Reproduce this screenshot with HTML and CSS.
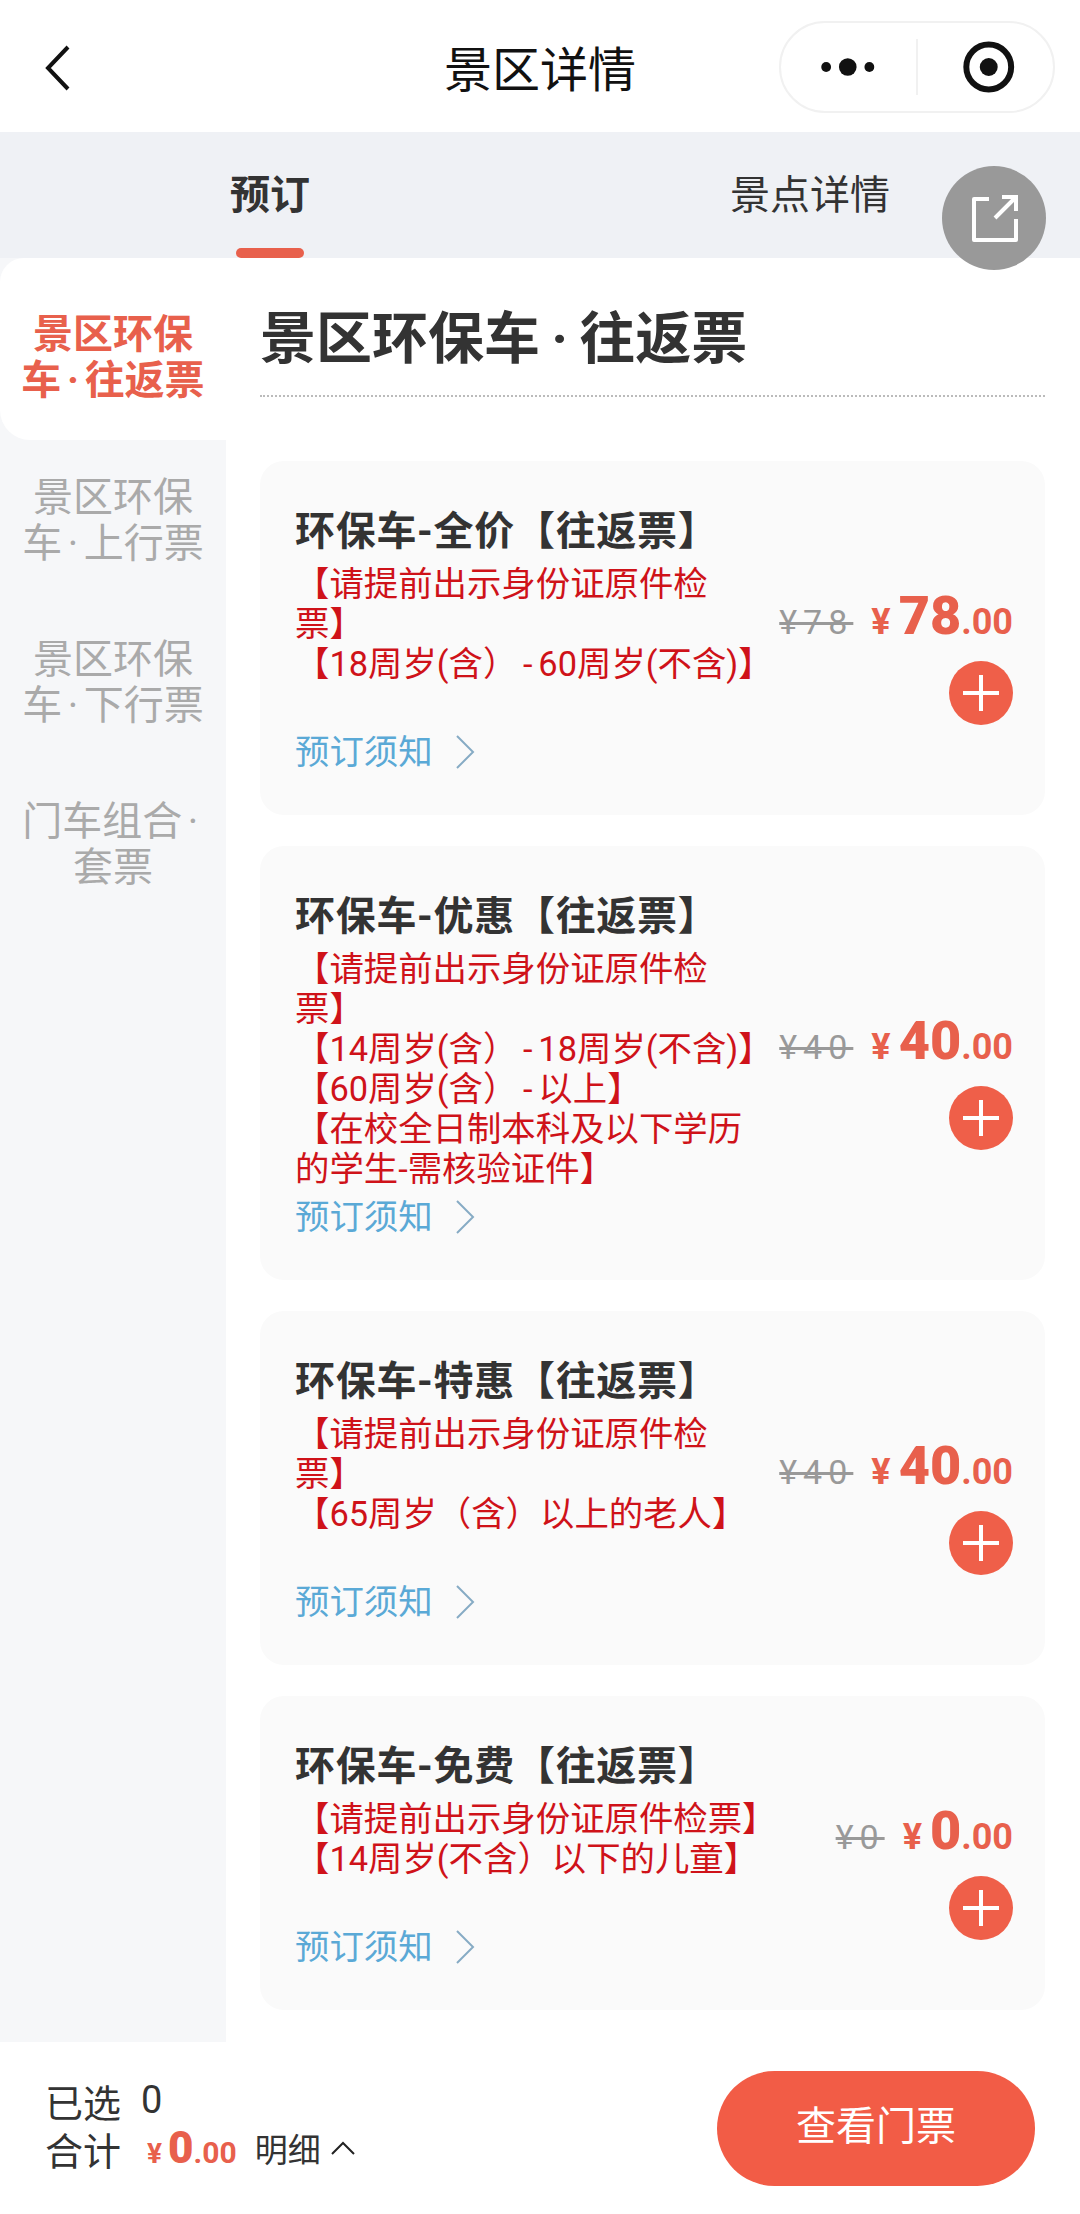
FILE: index.html
```html
<!DOCTYPE html>
<html lang="zh-CN">
<head>
  <meta charset="UTF-8" />
  <meta name="viewport" content="width=device-width, initial-scale=1.0"/>
  <title>景区详情</title>
  <link rel="stylesheet" href="styles.css">
</head>
<body>
  <div class="page">
    <div class="navBar">
      <svg class="backIcon" width="26" height="46" viewBox="0 0 26 46">
        <path d="M23 2 L3 23 L23 44" fill="none" stroke="#111" stroke-width="4"/>
      </svg>
      <div class="navTitle">景区详情</div>
      <div class="capsule">
        <svg class="capsuleMore" width="137" height="56" viewBox="0 0 137 56">
          <circle cx="46" cy="28" r="5" fill="#111"/>
          <circle cx="68" cy="28" r="9" fill="#111"/>
          <circle cx="90" cy="28" r="5" fill="#111"/>
        </svg>
        <svg class="capsuleClose" width="136" height="56" viewBox="0 0 136 56">
          <circle cx="71" cy="28" r="22.5" fill="none" stroke="#111" stroke-width="6"/>
          <circle cx="71" cy="28" r="9" fill="#111"/>
        </svg>
      </div>
    </div>

    <div class="tabs">
      <div class="tab active">预订</div>
      <div class="tab">景点详情</div>
    </div>

    <!-- 分享按钮 -->
    <div class="shareButton">
      <svg width="50" height="50" viewBox="0 0 50 50">
        <path d="M20 6 H5 V47 H47 V26" fill="none" stroke="#fff" stroke-width="4" stroke-linejoin="round"/>
        <path d="M26 25 L46 5 M33 4 H47 V18" fill="none" stroke="#fff" stroke-width="4"/>
      </svg>
    </div>

    <div class="main">
      <div class="sideMenu">
        <div class="menuItem active">景区环保<br>车<span class="dot">·</span>往返票</div>
        <div class="menuItem">景区环保<br>车<span class="dot">·</span>上行票</div>
        <div class="menuItem">景区环保<br>车<span class="dot">·</span>下行票</div>
        <div class="menuItem">门车组合<span class="dot">·</span><br>套票</div>
      </div>

      <div class="content">
        <div class="sectionTitle">景区环保车<span class="dot">·</span>往返票</div>

        <div class="ticketList">
          <div class="ticket">
            <div class="ticketInfo">
              <div class="ticketName">环保车-全价【往返票】</div>
              <div class="ticketRules extraLine">【请提前出示身份证原件检<br>票】<br>【18周岁(含） - 60周岁(不含)】</div>
              <div class="notice">预订须知
                <svg class="noticeArrow" width="20" height="34" viewBox="0 0 20 34">
                  <path d="M2 1 L18 17 L2 33" fill="none" stroke="#86abc4" stroke-width="2"/>
                </svg>
              </div>
            </div>
            <div class="ticketSide">
              <div class="priceRow">
                <span class="oldPrice">¥78</span>
                <span class="price"><span class="yen">¥</span><b>78</b><span class="cents">.00</span></span>
              </div>
              <div class="addButton"></div>
            </div>
          </div>

          <div class="ticket">
            <div class="ticketInfo">
              <div class="ticketName">环保车-优惠【往返票】</div>
              <div class="ticketRules">【请提前出示身份证原件检<br>票】<br>【14周岁(含） - 18周岁(不含)】<br>【60周岁(含） - 以上】<br>【在校全日制本科及以下学历<br>的学生-需核验证件】</div>
              <div class="notice">预订须知
                <svg class="noticeArrow" width="20" height="34" viewBox="0 0 20 34">
                  <path d="M2 1 L18 17 L2 33" fill="none" stroke="#86abc4" stroke-width="2"/>
                </svg>
              </div>
            </div>
            <div class="ticketSide">
              <div class="priceRow">
                <span class="oldPrice">¥40</span>
                <span class="price"><span class="yen">¥</span><b>40</b><span class="cents">.00</span></span>
              </div>
              <div class="addButton"></div>
            </div>
          </div>

          <div class="ticket">
            <div class="ticketInfo">
              <div class="ticketName">环保车-特惠【往返票】</div>
              <div class="ticketRules extraLine">【请提前出示身份证原件检<br>票】<br>【65周岁（含）以上的老人】</div>
              <div class="notice">预订须知
                <svg class="noticeArrow" width="20" height="34" viewBox="0 0 20 34">
                  <path d="M2 1 L18 17 L2 33" fill="none" stroke="#86abc4" stroke-width="2"/>
                </svg>
              </div>
            </div>
            <div class="ticketSide">
              <div class="priceRow">
                <span class="oldPrice">¥40</span>
                <span class="price"><span class="yen">¥</span><b>40</b><span class="cents">.00</span></span>
              </div>
              <div class="addButton"></div>
            </div>
          </div>

          <div class="ticket">
            <div class="ticketInfo">
              <div class="ticketName">环保车-免费【往返票】</div>
              <div class="ticketRules extraLine">【请提前出示身份证原件检票】<br>【14周岁(不含）以下的儿童】</div>
              <div class="notice">预订须知
                <svg class="noticeArrow" width="20" height="34" viewBox="0 0 20 34">
                  <path d="M2 1 L18 17 L2 33" fill="none" stroke="#86abc4" stroke-width="2"/>
                </svg>
              </div>
            </div>
            <div class="ticketSide">
              <div class="priceRow">
                <span class="oldPrice">¥0</span>
                <span class="price"><span class="yen">¥</span><b>0</b><span class="cents">.00</span></span>
              </div>
              <div class="addButton"></div>
            </div>
          </div>
        </div>
      </div>
    </div>

    <div class="footer">
      <div class="summary">
        <div class="summaryRow">已选<span class="selectedCount">0</span></div>
        <div class="summaryRow">
          合计
          <span class="totalPrice"><span class="yen">¥</span><b>0</b><span class="cents">.00</span></span>
          <span class="detailLink">明细</span>
          <svg width="24" height="14" viewBox="0 0 24 14">
            <path d="M1 13 L12 2 L23 13" fill="none" stroke="#222" stroke-width="2"/>
          </svg>
        </div>
      </div>
      <div class="checkButton">查看门票</div>
    </div>
  </div>
</body>
</html>
```

FILE: styles.css
```css
* {
  box-sizing: border-box;
}
body {
  margin: 0;
  font-family: Roboto, "Noto Sans CJK SC", sans-serif;
  color: #333;
  background-color: white;
}
.page {
  position: relative;
  display: flex;
  flex-direction: column;
  width: 1080px;
  height: 2214px;
  overflow: hidden;
}

/* 顶部导航 */
.navBar {
  display: flex;
  align-items: center;
  justify-content: center;
  position: relative;
  height: 132px;
  background-color: white;
}
.navTitle {
  font-size: 48px;
  color: #111;
}
.backIcon {
  position: absolute;
  left: 45px;
  top: 45px;
}
.capsule {
  position: absolute;
  left: 779px;
  top: 21px;
  width: 276px;
  height: 92px;
  display: flex;
  align-items: center;
  border: 2px solid #f1f1f1;
  border-radius: 46px;
}
.capsuleMore {
  border-right: 2px solid #f1f1f1;
}

/* 标签 */
.tabs {
  display: flex;
  height: 126px;
  background-color: #eff1f5;
}
.tab {
  position: relative;
  width: 540px;
  padding-top: 34px;
  text-align: center;
  font-size: 40px;
  line-height: 60px;
}
.tab.active {
  font-weight: bold;
}
.tab.active::after {
  content: "";
  position: absolute;
  left: 236px;
  bottom: 0;
  width: 68px;
  height: 10px;
  border-radius: 5px;
  background-color: #e8604c;
}
.shareButton {
  position: absolute;
  left: 942px;
  top: 166px;
  width: 104px;
  height: 104px;
  display: flex;
  align-items: center;
  justify-content: center;
  border-radius: 50%;
  background-color: #999;
  z-index: 2;
}

/* 主体 */
.main {
  flex: 1;
  display: flex;
  min-height: 0;
  background-color: #eff1f5;
}
.sideMenu {
  width: 226px;
  padding-top: 17px;
  flex-shrink: 0;
  position: relative;
  background-color: #f6f7f9;
}
.menuItem {
  height: 162px;
  padding: 35px 14px 0;
  text-align: center;
  font-size: 40px;
  line-height: 46px;
  color: #aaa;
}
.menuItem.active {
  height: 182px;
  margin-top: -17px;
  padding-top: 54px;
  font-weight: bold;
  color: #e8604c;
  background-color: white;
  border-radius: 24px 0 0 30px;
}
.dot {
  display: inline-block;
  margin: 0 .14em;
  line-height: 1;
}
.content {
  flex: 1;
  padding: 0 35px 0 34px;
  background-color: white;
}
.sectionTitle {
  padding-top: 41px;
  height: 139px;
  border-bottom: 2px dotted #bbb;
  font-size: 56px;
  line-height: 80px;
  font-weight: bold;
}
.sectionTitle .dot {
  margin: 0 .2em;
}

/* 票 */
.ticketList {
  display: flex;
  flex-direction: column;
  gap: 31px;
  margin-top: 64px;
}
.ticket {
  display: flex;
  align-items: center;
  gap: 4px;
  padding: 43px 32px 39px 35px;
  border-radius: 24px;
  background-color: #fafafa;
}
.ticketInfo {
  flex: 1;
  min-width: 0;
}
.ticketName {
  font-size: 40px;
  line-height: 56px;
  font-weight: bold;
  letter-spacing: .7px;
  white-space: nowrap;
}
.ticketRules {
  margin-top: 4px;
  font-size: 34.4px;
  line-height: 40px;
  word-spacing: -2.8px;
  color: #cf1219;
  white-space: nowrap;
}
.ticketRules.extraLine {
  padding-bottom: 40px;
}
.notice {
  display: flex;
  align-items: center;
  gap: 22px;
  margin-top: 4px;
  font-size: 34.4px;
  line-height: 48px;
  color: #5aa9d6;
}
.ticketSide {
  flex-shrink: 0;
  display: flex;
  flex-direction: column;
  align-items: flex-end;
  margin-top: 30px;
}
.priceRow {
  display: flex;
  align-items: baseline;
  gap: 18px;
  height: 60px;
  line-height: 60px;
}
.oldPrice {
  font-size: 34px;
  letter-spacing: 6px;
  color: #999;
  text-decoration: line-through;
}
.price,
.totalPrice {
  color: #e8604c;
  font-weight: bold;
}
.price b {
  font-size: 54px;
  margin-left: 8px;
}
.yen {
  font-size: 36px;
}
.cents {
  font-size: 36px;
}
.addButton {
  position: relative;
  width: 64px;
  height: 64px;
  margin-top: 15px;
  border-radius: 50%;
  background-color: #ef5f49;
}
.addButton::before,
.addButton::after {
  content: "";
  position: absolute;
  left: 14px;
  top: 30px;
  width: 36px;
  height: 4px;
  background-color: white;
}
.addButton::after {
  transform: rotate(90deg);
}

/* 底部 */
.footer {
  height: 172px;
  display: flex;
  align-items: center;
  justify-content: space-between;
  padding: 0 45px;
  background-color: white;
}
.summary {
  padding-bottom: 8px;
}
.summaryRow {
  display: flex;
  align-items: center;
  height: 48px;
  font-size: 38px;
}
.selectedCount {
  margin-left: 20px;
}
.totalPrice {
  margin-left: 26px;
}
.totalPrice b {
  font-size: 44px;
  margin-left: 6px;
}
.totalPrice .yen {
  font-size: 28px;
}
.totalPrice .cents {
  font-size: 30px;
}
.detailLink {
  margin: 0 10px 0 18px;
  font-size: 33px;
}
.checkButton {
  width: 318px;
  height: 115px;
  border-radius: 58px;
  text-align: center;
  font-size: 40px;
  line-height: 112px;
  color: white;
  background-color: #f25c46;
}
```
